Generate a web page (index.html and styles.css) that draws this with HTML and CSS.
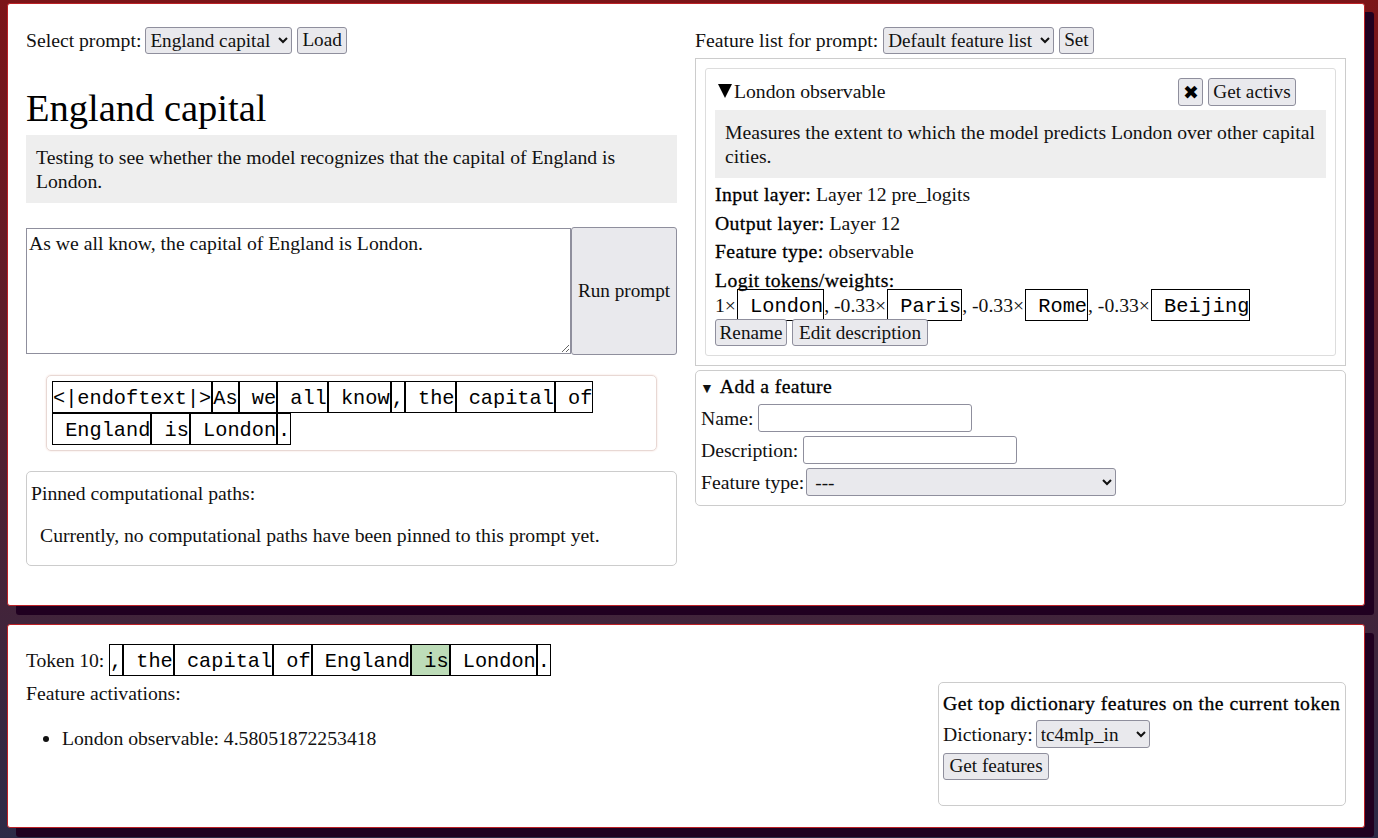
FILE: index.html
```html
<!DOCTYPE html>
<html>
<head>
  <title>Prompt explorer</title>
  <link rel="stylesheet" href="styles.css">
</head>
<body>
  <div class="panel top-panel">
    <div class="col">
      <div class="row">
        <label>Select prompt:</label>
        <select class="prompt-select"><option>England capital</option></select>
        <button>Load</button>
      </div>
      <h1>England capital</h1>
      <div class="description">Testing to see whether the model recognizes that the capital of England is London.</div>
      <div class="prompt-input">
        <textarea>As we all know, the capital of England is London.</textarea>
        <button class="run-btn">Run prompt</button>
      </div>
      <div class="token-box">
        <span class="tok">&lt;|endoftext|&gt;</span><span class="tok">As</span><span class="tok"> we</span><span class="tok"> all</span><span class="tok"> know</span><span class="tok">,</span><span class="tok"> the</span><span class="tok"> capital</span><span class="tok"> of</span><span class="tok"> England</span><span class="tok"> is</span><span class="tok"> London</span><span class="tok">.</span>
      </div>
      <div class="box pinned">
        <div>Pinned computational paths:</div>
        <p>Currently, no computational paths have been pinned to this prompt yet.</p>
      </div>
    </div>

    <div class="col">
      <div class="row">
        <label>Feature list for prompt:</label>
        <select class="list-select"><option>Default feature list</option></select>
        <button>Set</button>
      </div>
      <div class="feature-list">
        <div class="feature">
          <div class="feature-head">
            <span class="arrow"></span><span class="feature-name">London observable</span>
            <button class="del-btn">&#10006;</button>
            <button class="activs-btn">Get activs</button>
          </div>
          <div class="description">Measures the extent to which the model predicts London over other capital cities.</div>
          <div class="info first"><b>Input layer:</b> Layer 12 pre_logits</div>
          <div class="info"><b>Output layer:</b> Layer 12</div>
          <div class="info"><b>Feature type:</b> observable</div>
          <div class="logit-title"><b>Logit tokens/weights:</b></div>
          <div class="logits">1&times;<span class="tok"> London</span>, -0.33&times;<span class="tok"> Paris</span>, -0.33&times;<span class="tok"> Rome</span>, -0.33&times;<span class="tok"> Beijing</span></div>
          <div class="feature-btns">
            <button class="rename-btn">Rename</button>
            <button class="edit-btn">Edit description</button>
          </div>
        </div>
      </div>
      <div class="box add-feature">
        <div class="add-title"><span class="small-arrow">&#9660;</span><b>Add a feature</b></div>
        <div class="form-row"><label>Name:</label><input type="text" class="text-input"></div>
        <div class="form-row"><label>Description:</label><input type="text" class="text-input"></div>
        <div class="form-row"><label>Feature type:</label><select class="type-select"><option>---</option></select></div>
      </div>
    </div>
  </div>

  <div class="panel bottom-panel">
    <div class="bottom-left">
      <div class="token-line">Token 10: <span class="tok">,</span><span class="tok"> the</span><span class="tok"> capital</span><span class="tok"> of</span><span class="tok"> England</span><span class="tok active"> is</span><span class="tok"> London</span><span class="tok">.</span></div>
      <div class="activ-title">Feature activations:</div>
      <ul>
        <li>London observable: 4.58051872253418</li>
      </ul>
    </div>
    <div class="box top-features">
      <div class="top-title"><b>Get top dictionary features on the current token</b></div>
      <div class="form-row"><label>Dictionary:</label><select class="dict-select"><option>tc4mlp_in</option></select></div>
      <div class="form-row"><button class="features-btn">Get features</button></div>
    </div>
  </div>
</body>
</html>
```

FILE: styles.css
```css
body {
  margin: 0;
  height: 838px;
  box-sizing: border-box;
  overflow: hidden;
  padding: 3px 13px 0 7px;
  background: linear-gradient(#7c1418, #2c2a47);
  font-family: "Liberation Serif", serif;
  font-size: 19.7px;
  line-height: 24px;
  color: #111;
}

.panel {
  background: #fff;
  border: 1px solid #bb2025;
  border-radius: 3px;
  box-shadow: 9px 9px 0 #200020;
  box-sizing: border-box;
}

.top-panel {
  height: 603px;
  padding: 22px 18px 0;
  display: grid;
  grid-template-columns: 651px 651px;
  column-gap: 18px;
  align-content: start;
}

.bottom-panel {
  height: 204px;
  margin-top: 18px;
  padding: 19px 18px 0;
  display: flex;
  justify-content: space-between;
  align-items: flex-start;
}

.row {
  display: flex;
  align-items: center;
  gap: 5px;
  height: 28px;
}

select, button, input, textarea {
  font-family: inherit;
  font-size: 19.2px;
  color: #111;
  box-sizing: border-box;
}

textarea {
  font-size: 19.7px;
}

select, button {
  height: 27px;
  background: #e9e9ed;
  border: 1px solid #8f8f9d;
  border-radius: 3px;
  padding: 0 4px;
  white-space: nowrap;
}

select {
  padding: 0;
}

.prompt-select {
  width: 147px;
  margin-left: -1px;
}

.list-select {
  width: 171px;
}

h1 {
  font-size: 38.5px;
  line-height: 44px;
  font-weight: normal;
  margin: 32px 0 5px;
  color: #000;
}

.description {
  background: #eee;
  padding: 10px;
}

.prompt-input {
  display: flex;
  margin: 24px 0 20px;
  height: 128px;
}

textarea {
  width: 545px;
  height: 126px;
  margin-top: 1px;
  padding: 3px 2px;
  border: 1px solid #8f8f9d;
  border-radius: 0;
}

.run-btn {
  width: 106px;
  height: 128px;
  padding: 0;
}

.tok {
  display: inline-block;
  font-family: "Liberation Mono", monospace;
  font-size: 20.3px;
  line-height: 26px;
  padding-top: 4px;
  border: 1px solid #000;
  color: #000;
  white-space: pre;
  letter-spacing: 0;
}

.token-box {
  margin: 0 20px 20px;
  height: 76px;
  box-sizing: border-box;
  border: 1px solid #e8d8d4;
  border-radius: 5px;
  padding: 5px;
  box-shadow: 0 0 2px #f0d8d0;
}

.token-box .tok {
  vertical-align: top;
}

.box {
  border: 1px solid #ccc;
  border-radius: 5px;
  box-sizing: border-box;
}

.pinned {
  height: 95px;
  padding: 9px 4px;
}

.pinned p {
  margin: 18px 0 0 9px;
}

.feature-list {
  margin-top: 4px;
  height: 308px;
  box-sizing: border-box;
  border: 1px solid #ccc;
  padding: 9px;
}

.feature {
  height: 288px;
  box-sizing: border-box;
  border: 1px solid #ddd;
  border-radius: 3px;
  padding: 9px;
}

.feature-head {
  display: flex;
  align-items: flex-start;
  height: 28px;
  gap: 5px;
  margin-bottom: 4px;
}

/* triangle drawn with borders so it keeps to its own width */
.arrow {
  width: 0;
  height: 0;
  margin: 6px -3px 0 3px;
  border-left: 7.5px solid transparent;
  border-right: 7.5px solid transparent;
  border-top: 14px solid #000;
}

.feature-name {
  flex: 1;
  line-height: 27px;
}

.del-btn {
  width: 25px;
  height: 28px;
  padding: 0;
  color: #000;
}

.activs-btn {
  width: 88px;
  height: 28px;
  padding: 0;
  margin-right: 30px;
}

.info {
  margin-top: 4.5px;
}

.info.first {
  margin-top: 4px;
}

.info b, .logit-title b, .add-title b {
  font-weight: normal;
  color: #000;
  letter-spacing: 0.4px;
  -webkit-text-stroke: 0.3px #000;
}

.top-title b {
  font-weight: normal;
  color: #000;
  letter-spacing: 0.5px;
  -webkit-text-stroke: 0.3px #000;
}

.logit-title {
  margin-top: 5px;
  height: 21px;
}

.logits {
  height: 30px;
  white-space: nowrap;
}

.logits .tok {
  margin-left: 1px;
}

.feature-btns {
  display: flex;
  gap: 5px;
  position: relative;
}

.rename-btn {
  width: 72px;
  padding: 0;
}

.edit-btn {
  width: 136px;
  padding: 0;
}

.features-btn {
  width: 106px;
  padding: 0;
}

.add-feature {
  margin-top: 4px;
  height: 136px;
  padding: 3px 5px;
}

.add-title {
  height: 24px;
  margin-bottom: 4px;
}

.small-arrow {
  font-size: 14px;
  line-height: 14px;
  margin-right: 6px;
  margin-left: -1px;
}

.form-row {
  display: flex;
  align-items: center;
  gap: 5px;
  height: 32px;
}

.text-input {
  width: 214px;
  height: 28px;
  border: 1px solid #8f8f9d;
  border-radius: 3px;
}

.type-select {
  width: 310px;
  height: 28px;
  margin-left: -3px;
  padding-left: 4px;
}

.token-line {
  height: 32px;
  line-height: 32px;
  white-space: nowrap;
  letter-spacing: -0.1px;
}

.token-line .tok {
  vertical-align: top;
}

.active {
  background: #bddcb8;
}

.activ-title {
  margin-top: 5px;
}

ul {
  margin: 21px 0 0;
  padding-left: 36px;
}

.top-features {
  width: 408px;
  height: 124px;
  margin-top: 38px;
  padding: 8px 4px 4px;
}

.top-title {
  margin-bottom: 3px;
  white-space: nowrap;
}

.dict-select {
  width: 114px;
  height: 28px;
  margin-left: -2px;
}
```
